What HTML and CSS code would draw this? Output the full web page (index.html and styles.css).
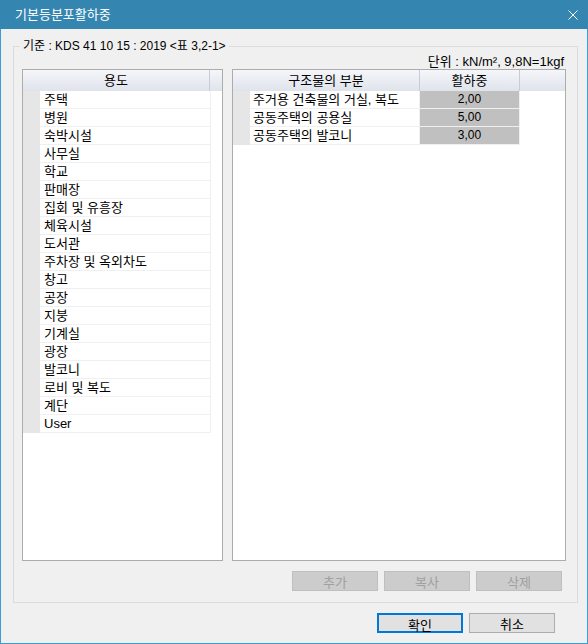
FILE: index.html
```html
<!DOCTYPE html>
<html lang="ko">
<head>
    <meta charset="UTF-8">
    <title>기본등분포활하중</title>
    <link rel="stylesheet" href="styles.css">
</head>
<body>
    <div class="dialog">
        <div class="titlebar">
            <span class="title">기본등분포활하중</span>
            <svg class="close" width="10" height="10" viewBox="0 0 10 10">
                <path d="M0.5 0.5L9.5 9.5M9.5 0.5L0.5 9.5" stroke="#fff" stroke-width="1"/>
            </svg>
        </div>

        <fieldset class="group">
            <legend>기준 : KDS 41 10 15 : 2019 &lt;표 3,2-1&gt;</legend>
            <div class="unit">단위 : kN/m², 9,8N=1kgf</div>

            <div class="panels">
                <div class="grid grid-left">
                    <div class="head">
                        <div class="hc h-use">용도</div>
                        <div class="hc h-fill"></div>
                    </div>
                    <div class="row"><div class="rh"></div><div class="cell c-use">주택</div></div>
                    <div class="row"><div class="rh"></div><div class="cell c-use">병원</div></div>
                    <div class="row"><div class="rh"></div><div class="cell c-use">숙박시설</div></div>
                    <div class="row"><div class="rh"></div><div class="cell c-use">사무실</div></div>
                    <div class="row"><div class="rh"></div><div class="cell c-use">학교</div></div>
                    <div class="row"><div class="rh"></div><div class="cell c-use">판매장</div></div>
                    <div class="row"><div class="rh"></div><div class="cell c-use">집회 및 유흥장</div></div>
                    <div class="row"><div class="rh"></div><div class="cell c-use">체육시설</div></div>
                    <div class="row"><div class="rh"></div><div class="cell c-use">도서관</div></div>
                    <div class="row"><div class="rh"></div><div class="cell c-use">주차장 및 옥외차도</div></div>
                    <div class="row"><div class="rh"></div><div class="cell c-use">창고</div></div>
                    <div class="row"><div class="rh"></div><div class="cell c-use">공장</div></div>
                    <div class="row"><div class="rh"></div><div class="cell c-use">지붕</div></div>
                    <div class="row"><div class="rh"></div><div class="cell c-use">기계실</div></div>
                    <div class="row"><div class="rh"></div><div class="cell c-use">광장</div></div>
                    <div class="row"><div class="rh"></div><div class="cell c-use">발코니</div></div>
                    <div class="row"><div class="rh"></div><div class="cell c-use">로비 및 복도</div></div>
                    <div class="row"><div class="rh"></div><div class="cell c-use">계단</div></div>
                    <div class="row"><div class="rh"></div><div class="cell c-use">User</div></div>
                </div>

                <div class="grid grid-right">
                    <div class="head">
                        <div class="hc h-part">구조물의 부분</div>
                        <div class="hc h-load">활하중</div>
                        <div class="hc h-fill"></div>
                    </div>
                    <div class="row"><div class="rh"></div><div class="cell c-part">주거용 건축물의 거실, 복도</div><div class="cell c-load">2,00</div></div>
                    <div class="row"><div class="rh"></div><div class="cell c-part">공동주택의 공용실</div><div class="cell c-load">5,00</div></div>
                    <div class="row"><div class="rh"></div><div class="cell c-part">공동주택의 발코니</div><div class="cell c-load">3,00</div></div>
                </div>
            </div>

            <div class="actions">
                <button class="btn" disabled>추가</button>
                <button class="btn" disabled>복사</button>
                <button class="btn" disabled>삭제</button>
            </div>
        </fieldset>

        <div class="footer">
            <button class="btn default">확인</button>
            <button class="btn">취소</button>
        </div>
    </div>
</body>
</html>
```

FILE: styles.css
```css
body {
    margin: 0;
    background: #f0f0f0;
    font-family: "Liberation Sans", "Noto Sans CJK KR", sans-serif;
    font-size: 13px;
    line-height: 14px;
    color: #000;
}

.dialog {
    width: 588px;
    height: 644px;
    box-sizing: border-box;
    border: 1px solid #3b9dd5;
    border-top: none;
    background: #f0f0f0;
    display: flex;
    flex-direction: column;
}

.titlebar {
    height: 29px;
    margin: 0 -1px;
    padding: 0 10px 0 15px;
    background: #3486b0;
    color: #fff;
    display: flex;
    align-items: center;
    justify-content: space-between;
}

.title {
    font-size: 13px;
}

/* group box */
.group {
    margin: 10px 0 0 12px;
    width: 565px;
    box-sizing: border-box;
    border: 1px solid #dcdcdc;
    padding: 1px 11px 11px 6px;
    min-inline-size: 0;
}

.group legend {
    padding: 0 3px;
    font-size: 12px;
    line-height: 14px;
}

.unit {
    text-align: right;
    line-height: 15px;
    padding-right: 2px;
}

.panels {
    display: flex;
    gap: 9px;
    margin-left: 2px;
    height: 492px;
}

/* grids */
.grid {
    box-sizing: border-box;
    height: 492px;
    border: 1px solid #acacac;
    background: #fff;
}

.grid-left {
    width: 201px;
}

.grid-right {
    width: 334px;
}

.head {
    display: flex;
    height: 21px;
    background: linear-gradient(#f5f6fa, #dfe3eb);
}

.hc {
    box-sizing: border-box;
    border-right: 1px solid #c8ccd5;
    text-align: center;
    line-height: 21px;
}

.h-use { width: 187px; }
.h-part { width: 187px; }
.h-load { width: 100px; }

.h-fill {
    flex: 1;
    border-right: none;
}

.row {
    display: flex;
    height: 18px;
}

.rh {
    width: 17px;
    background: #e6e6e6;
}

.cell {
    box-sizing: border-box;
    border-right: 1px solid #f0f0f0;
    border-bottom: 1px solid #f0f0f0;
    padding-left: 3px;
    line-height: 17px;
    white-space: nowrap;
}

.c-use {
    width: 171px;
    padding-left: 4px;
}

.c-part { width: 170px; }

.c-load {
    width: 100px;
    padding-left: 0;
    background: #c0c0c0;
    text-align: center;
    font-size: 12px;
}

/* buttons */
.actions {
    display: flex;
    justify-content: flex-end;
    gap: 6px;
    margin-top: 10px;
    padding-right: 4px;
}

.btn {
    width: 86px;
    height: 20px;
    box-sizing: border-box;
    padding: 0;
    border: 1px solid #adadad;
    background: #e1e1e1;
    font-family: inherit;
    font-size: 13px;
    color: #000;
}

.btn:disabled {
    background: #cccccc;
    border-color: #bfbfbf;
    color: #a0a0a0;
}

.btn.default {
    border: 2px solid #0078d7;
}

.footer {
    display: flex;
    justify-content: flex-end;
    gap: 6px;
    margin-top: 10px;
    padding-right: 32px;
}
```
